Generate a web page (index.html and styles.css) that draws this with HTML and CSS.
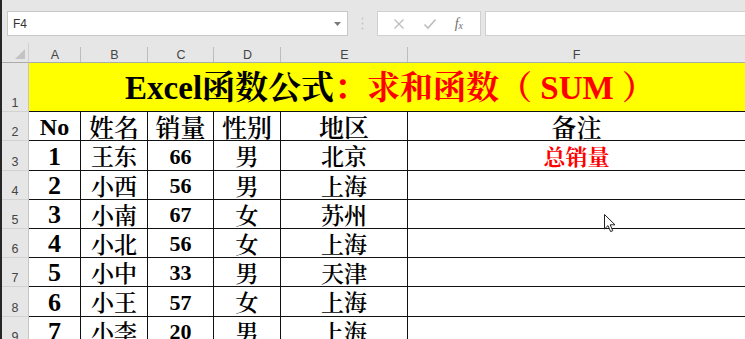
FILE: index.html
```html
<!DOCTYPE html>
<html lang="zh-CN">
<head>
<meta charset="utf-8">
<link rel="stylesheet" href="styles.css">
</head>
<body>
<div class="app">
  <div class="toolbar">
    <div class="namebox"><span class="ref">F4</span><svg class="drop" width="7" height="4" viewBox="0 0 7 4"><path d="M0 0H7L3.5 4Z" fill="#7a7a7a"/></svg></div>
    <div class="grip"><svg width="3" height="13" viewBox="0 0 3 13"><circle cx="1.5" cy="1.5" r="1" fill="#c4c4c4"/><circle cx="1.5" cy="6.5" r="1" fill="#c4c4c4"/><circle cx="1.5" cy="11.5" r="1" fill="#c4c4c4"/></svg></div>
    <div class="fbtns">
      <svg width="12" height="12" viewBox="0 0 12 12"><path d="M1.5 1.5L10.5 10.5M10.5 1.5L1.5 10.5" stroke="#bdbdbd" stroke-width="1.3" fill="none"/></svg>
      <svg width="14" height="12" viewBox="0 0 14 12"><path d="M1.5 6.5L5 10L12.5 1.5" stroke="#bdbdbd" stroke-width="1.6" fill="none"/></svg>
      <span class="fx">f<sub>x</sub></span>
    </div>
    <div class="finput"></div>
  </div>
  <div class="sheet">
    <div class="corner"><svg width="10" height="10" viewBox="0 0 10 10"><path d="M10 0V10H0Z" fill="#c3c3c3"/></svg></div>
    <div class="ch">A</div><div class="ch">B</div><div class="ch">C</div><div class="ch">D</div><div class="ch">E</div><div class="ch last">F</div>

    <div class="rh">1</div>
    <div class="title">Excel函数公式<span class="red">：求和函数（ SUM ）</span></div>

    <div class="rh">2</div>
    <div class="cell n hd">No</div><div class="cell c hd">姓名</div><div class="cell c hd">销量</div><div class="cell c hd">性别</div><div class="cell c hd">地区</div><div class="cell c hd last">备注</div>

    <div class="rh">3</div>
    <div class="cell n">1</div><div class="cell c">王东</div><div class="cell v">66</div><div class="cell c">男</div><div class="cell c">北京</div><div class="cell c note last">总销量</div>

    <div class="rh">4</div>
    <div class="cell n">2</div><div class="cell c">小西</div><div class="cell v">56</div><div class="cell c">男</div><div class="cell c">上海</div><div class="cell last"></div>

    <div class="rh">5</div>
    <div class="cell n">3</div><div class="cell c">小南</div><div class="cell v">67</div><div class="cell c">女</div><div class="cell c">苏州</div><div class="cell last"></div>

    <div class="rh">6</div>
    <div class="cell n">4</div><div class="cell c">小北</div><div class="cell v">56</div><div class="cell c">女</div><div class="cell c">上海</div><div class="cell last"></div>

    <div class="rh">7</div>
    <div class="cell n">5</div><div class="cell c">小中</div><div class="cell v">33</div><div class="cell c">男</div><div class="cell c">天津</div><div class="cell last"></div>

    <div class="rh">8</div>
    <div class="cell n">6</div><div class="cell c">小王</div><div class="cell v">57</div><div class="cell c">女</div><div class="cell c">上海</div><div class="cell last"></div>

    <div class="rh">9</div>
    <div class="cell n">7</div><div class="cell c">小李</div><div class="cell v">20</div><div class="cell c">男</div><div class="cell c">上海</div><div class="cell last"></div>
  </div>
  <svg class="cursor" width="12" height="19" viewBox="0 0 12 19"><path d="M0.5 0.5V15L4 11.6L6.6 17.6L8.8 16.7L6.2 10.8H11Z" fill="#fff" stroke="#222" stroke-width="1" stroke-linejoin="round"/></svg>
</div>
</body>
</html>
```
FILE: styles.css
```css
* { box-sizing: border-box; }
html, body { margin: 0; padding: 0; }
body {
  width: 745px;
  height: 339px;
  overflow: hidden;
  background: #e6e6e6;
  font-family: "Liberation Sans", Arial, sans-serif;
}
.app {
  position: relative;
  width: 745px;
  height: 339px;
  overflow: hidden;
  border-left: 2px solid #262626;
}
.toolbar {
  height: 43px;
  display: flex;
  align-items: flex-start;
  padding: 11px 0 0 5px;
  background: #e6e6e6;
}
.namebox {
  width: 341px;
  height: 25px;
  background: #fff;
  border: 1px solid #c8c8c8;
  display: flex;
  align-items: center;
  justify-content: space-between;
  padding: 0 6px 0 5px;
}
.ref { font-size: 12px; color: #333; }
.drop { margin-top: 1px; }
.grip {
  width: 29px;
  height: 25px;
  display: flex;
  align-items: center;
  justify-content: center;
}
.fbtns {
  width: 104px;
  height: 25px;
  background: #fff;
  border: 1px solid #d0d0d0;
  display: flex;
  align-items: center;
  justify-content: space-around;
  padding: 0 8px 0 6px;
}
.fx {
  font-family: "Liberation Serif", serif;
  font-style: italic;
  font-size: 14px;
  color: #6e6e6e;
}
.fx sub { font-size: 10px; vertical-align: -1px; }
.finput {
  flex: 1;
  height: 25px;
  margin-left: 4px;
  background: #fff;
  border: 1px solid #d0d0d0;
  border-right: none;
}
.sheet {
  display: grid;
  grid-template-columns: 27px 52px 67px 66px 67px 127px 1fr;
  grid-template-rows: 20px 49px 29px 30px 29px 29px 29px 29px 30px 29px;
  background: #fff;
}
.corner {
  background: #e6e6e6;
  border-right: 1px solid #cfcfcf;
  border-bottom: 1px solid #ababab;
  display: flex;
  align-items: flex-end;
  justify-content: flex-end;
  padding: 0 3px 3px 0;
}
.ch {
  background: #e6e6e6;
  border-bottom: 1px solid #ababab;
  display: flex;
  align-items: flex-end;
  justify-content: center;
  font-size: 12.5px;
  color: #444;
  line-height: 14px;
  padding-bottom: 0;
  position: relative;
}
.ch::after {
  content: "";
  position: absolute;
  right: 0;
  top: 4px;
  bottom: 0;
  width: 1px;
  background: #bdbdbd;
}
.ch.last::after { display: none; }
.rh {
  background: #e6e6e6;
  border-right: 1px solid #c6c6c6;
  border-bottom: 1px solid #d2d2d2;
  display: flex;
  align-items: flex-end;
  justify-content: center;
  font-size: 12.5px;
  color: #444;
  line-height: 14px;
  padding-bottom: 1px;
}
.title {
  grid-column: 2 / -1;
  background: #ffff00;
  border-bottom: 1px solid #111;
  display: flex;
  align-items: center;
  justify-content: center;
  padding: 1px 0 0 6px;
  font-family: "Liberation Serif", "Noto Serif CJK SC", "Noto Sans CJK SC", serif;
  font-weight: 700;
  font-size: 33px;
  line-height: 36px;
  color: #000;
  white-space: pre;
}
.red { color: #f00; }
.cell {
  border-right: 1px solid #111;
  border-bottom: 1px solid #111;
  display: flex;
  align-items: center;
  justify-content: center;
  color: #000;
  white-space: nowrap;
  line-height: 1;
}
.cell.last { border-right: none; }
.n {
  font-family: "Liberation Serif", serif;
  font-weight: 700;
  font-size: 26px;
  padding-top: 2px;
}
.n.hd { font-size: 24px; }
.v {
  font-family: "Liberation Serif", serif;
  font-weight: 700;
  font-size: 22px;
  padding-top: 2px;
}
.c {
  font-family: "Noto Serif CJK SC", "Noto Sans CJK SC", sans-serif;
  font-weight: 600;
  font-size: 23px;
}
.hd.c { font-size: 25px; }
.note {
  color: #f00;
  font-size: 22px;
  font-weight: 700;
}
.cursor {
  position: absolute;
  left: 602px;
  top: 214px;
}
```
